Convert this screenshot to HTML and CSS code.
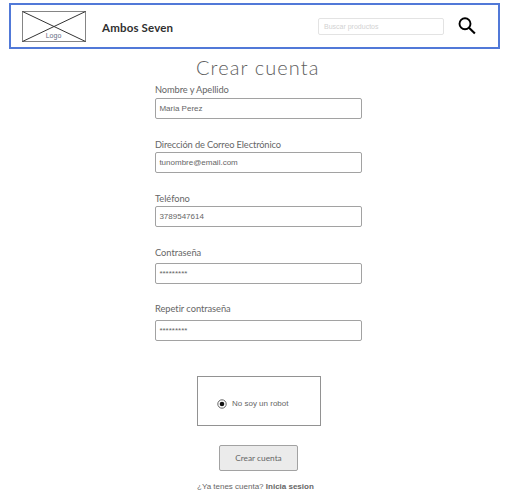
FILE: index.html
```html
<!DOCTYPE html>
<html lang="es">
<head>
<meta charset="utf-8">
<title>Crear cuenta</title>
<link rel="stylesheet" href="styles.css">
</head>
<body>
<header class="header">
  <div class="logo">
    <svg class="logo-box" width="64" height="31" viewBox="0 0 64 31"><rect x=".5" y=".5" width="63" height="30" fill="none" stroke="#858585"/><path d="M.5.5l63 30M63.5.5l-63 30" stroke="#333" stroke-width="1"/></svg>
    <span class="logo-text">Logo</span>
  </div>
  <span class="brand">Ambos Seven</span>
  <div class="search">Buscar productos</div>
  <svg class="search-icon" width="18" height="18" viewBox="0 0 18 18" fill="none" stroke="#000"><circle cx="7" cy="6.7" r="5.5" stroke-width="1.9"/><path d="M11 10.7l5.9 5.9" stroke-width="2.1"/></svg>
</header>
<main class="form">
  <h1 class="title">Crear cuenta</h1>
  <div class="field"><label class="label name">Nombre y Apellido</label><div class="input">Maria Perez</div></div>
  <div class="field"><label class="label mail">Dirección de Correo Electrónico</label><div class="input">tunombre@email.com</div></div>
  <div class="field"><label class="label phone">Teléfono</label><div class="input">3789547614</div></div>
  <div class="field tall"><label class="label">Contraseña</label><div class="input">*********</div></div>
  <div class="field tall"><label class="label repeat">Repetir contraseña</label><div class="input">*********</div></div>
  <div class="captcha">
    <svg width="10" height="10" viewBox="0 0 10 10"><circle cx="5" cy="5" r="4.2" fill="#fff" stroke="#555" stroke-width=".9"/><circle cx="5" cy="5" r="2.3" fill="#111"/></svg>
    <span>No soy un robot</span>
  </div>
  <div class="button">Crear cuenta</div>
  <p class="login">¿Ya tenes cuenta? <b>Inicia sesion</b></p>
</main>
</body>
</html>
```
FILE: styles.css
```css
* { box-sizing: border-box; }
body {
  margin: 0;
  padding-top: 3px;
  background: #fff;
  color: #666;
  font: 8px/10px "Liberation Sans", sans-serif;
  overflow: hidden;
}
.header {
  display: flex;
  align-items: flex-start;
  width: 491px;
  height: 46px;
  margin-left: 9px;
  border: 2px solid #5179d8;
}
.logo {
  position: relative;
  width: 64px;
  height: 31px;
  margin: 6px 0 0 11px;
}
.logo-box { display: block; }
.logo-text {
  position: absolute;
  left: 0;
  right: 1px;
  top: 20px;
  text-align: center;
  font-size: 7px;
  color: #666c85;
}
.brand {
  width: 216px;
  margin: 15px 0 0 16px;
  font: bold 11.5px/16px Lato, sans-serif;
  letter-spacing: .17px;
  color: #303030;
  white-space: nowrap;
}
.search {
  width: 126px;
  height: 17px;
  margin-top: 13px;
  padding: 3px 5px;
  border: 1px solid #e3e3e3;
  border-radius: 2px;
  font-size: 7px;
  color: #d2d2d2;
}
.search-icon { margin: 12px 0 0 14px; }
.form {
  width: 207px;
  margin-left: 155px;
}
.title {
  margin: 6px 0 0 41px;
  font: 300 20px/24px Lato, sans-serif;
  letter-spacing: 1.1px;
  color: #606060;
  white-space: nowrap;
}
.field {
  display: flex;
  flex-direction: column;
  justify-content: flex-end;
  height: 54px;
}
.form .field:nth-child(2) { height: 40px; }
.form .tall { height: 57px; }
.label {
  margin: 0 0 2px;
  font: 9.3px/12px Lato, sans-serif;
  letter-spacing: -.04px;
}
.name { letter-spacing: -.1px; }
.mail {
  margin-bottom: 1px;
  letter-spacing: -.13px;
}
.phone { margin-bottom: 1px; }
.tall .label { margin-bottom: 4px; }
.tall .repeat { margin-bottom: 5px; }
.input {
  height: 21px;
  padding: 5px 3.4px 0;
  border: 1px solid #a2a2a2;
  border-radius: 2px;
}
.captcha {
  display: flex;
  align-items: center;
  gap: 5px;
  width: 124px;
  height: 50px;
  margin: 35px 0 0 42px;
  padding: 6px 0 0 19px;
  border: 1px solid #929292;
}
.button {
  width: 79px;
  height: 26px;
  margin: 19px 0 0 64px;
  border: 1px solid #a2a2a2;
  border-radius: 2px;
  background: #ebebeb;
  font: 8.3px/25px Lato, sans-serif;
  text-align: center;
}
.login {
  margin: 11px 0 0 42px;
  white-space: nowrap;
}
```
